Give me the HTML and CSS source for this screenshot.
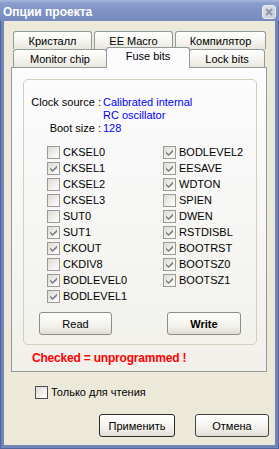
FILE: index.html
```html
<!DOCTYPE html>
<html lang="ru">
<head>
    <meta charset="UTF-8">
    <title>Опции проекта</title>
    <link rel="stylesheet" href="styles.css">
</head>
<body>
    <div class="window">
        <div class="titlebar">
            <span class="title">Опции проекта</span>
            <span class="close">
                <svg width="8" height="8" viewBox="0 0 8 8"><path d="M1 1 L7 7 M7 1 L1 7" stroke="#8e96a8" stroke-width="2" fill="none"/></svg>
            </span>
        </div>

        <div class="client">
            <!-- Tab headers, two rows -->
            <div class="tabs">
                <div class="tab-row">
                    <div class="tab w-kr">Кристалл</div>
                    <div class="tab w-ee">EE Macro</div>
                    <div class="tab w-comp">Компилятор</div>
                </div>
                <div class="tab-row front">
                    <div class="tab w-mon">Monitor chip</div>
                    <div class="tab w-fuse active">Fuse bits</div>
                    <div class="tab w-lock">Lock bits</div>
                </div>
            </div>

            <div class="panel">
                <div class="group">
                    <div class="info">
                        <span class="key">Clock source :</span>
                        <span class="val">Calibrated internal<br>RC oscillator</span>
                        <span class="key">Boot size :</span>
                        <span class="val">128</span>
                    </div>

                    <div class="bits" id="bits"></div>

                    <div class="actions">
                        <button class="btn read">Read</button>
                        <button class="btn write">Write</button>
                    </div>
                </div>
                <p class="warn">Checked = unprogrammed !</p>
            </div>

            <div class="readonly">
                <span class="cb dark"></span>
                <span>Только для чтения</span>
            </div>

            <div class="footer">
                <button class="btn apply">Применить</button>
                <button class="btn cancel">Отмена</button>
            </div>
        </div>
    </div>

    <script>
        // Fuse bits: [name, checked]
        const fuses = [
            ['CKSEL0', false], ['CKSEL1', true], ['CKSEL2', false], ['CKSEL3', false],
            ['SUT0', false], ['SUT1', true], ['CKOUT', true], ['CKDIV8', false],
            ['BODLEVEL0', true], ['BODLEVEL1', true],
            ['BODLEVEL2', true], ['EESAVE', true], ['WDTON', true], ['SPIEN', false],
            ['DWEN', true], ['RSTDISBL', true], ['BOOTRST', true], ['BOOTSZ0', true],
            ['BOOTSZ1', true]
        ];
        const tick = '<svg width="7" height="7" viewBox="0 0 7 7"><path d="M0 2.5 L2.5 5 L7 0.5 V3 L2.5 7 L0 4.5Z" fill="#7e7e7e"/></svg>';
        const bits = document.getElementById('bits');

        fuses.forEach(([name, checked]) => {
            const row = document.createElement('div');
            row.className = 'bit';
            row.innerHTML = `<span class="cb">${checked ? tick : ''}</span><span>${name}</span>`;
            bits.appendChild(row);
        });
    </script>
</body>
</html>
```

FILE: styles.css
```css
body {
    margin: 0;
    font-family: "Liberation Sans", Arial, sans-serif;
    font-size: 11px;
    color: #000;
}

.window {
    width: 279px;
    height: 449px;
    box-sizing: border-box;
    display: flex;
    flex-direction: column;
    background: #7084b8;
    border: 1px solid #52649a;
    border-top: none;
}

.titlebar {
    height: 21px;
    margin: 0 -1px;
    display: flex;
    align-items: center;
    justify-content: space-between;
    padding: 0 3px 0 3px;
    background: linear-gradient(#a9b8dc 0, #8c9ecd 3px, #7f93c4 50%, #768abd 100%);
}

.title {
    color: #fff;
    font-weight: bold;
    font-size: 12px;
    padding-top: 2px;
}

.close {
    width: 14px;
    height: 14px;
    box-sizing: border-box;
    border: 1px solid #e8ecf4;
    border-radius: 3px;
    background: linear-gradient(135deg, #dfe3ec, #c3cadb);
    display: flex;
    align-items: center;
    justify-content: center;
    margin-top: 2px;
}

.client {
    flex: 1;
    margin: 0 3px 3px;
    background: #ece9d8;
    display: flex;
    flex-direction: column;
}

/* tabs */
.tabs {
    margin: 10px 0 0 7px;
    position: relative;
    z-index: 1;
}

.tab-row {
    display: flex;
    height: 18px;
    padding-left: 2px;
}

.tab {
    height: 18px;
    box-sizing: border-box;
    border: 1px solid #919b9c;
    border-bottom: none;
    border-radius: 3px 3px 0 0;
    background: linear-gradient(#ffffff, #f3f2ec 60%, #e9e7dd);
    text-align: center;
    line-height: 18px;
}

.w-kr { width: 79px; margin-right: 2px; }
.w-ee { width: 79px; margin-right: 2px; }
.w-comp { width: 91px; }

.w-mon { width: 94px; }
.w-fuse { width: 84px; margin-left: -1px; }
.w-lock { width: 76px; margin-left: -1px; }

.tab.active {
    height: 21px;
    margin-top: -2px;
    line-height: 17px;
    background: #fcfcfe;
    border-color: #919b9c;
    position: relative;
    z-index: 2;
}

.panel {
    margin-left: 7px;
    width: 256px;
    height: 305px;
    box-sizing: border-box;
    border: 1px solid #919b9c;
    background: linear-gradient(#fcfcfe, #f1f0ea);
    display: flex;
    flex-direction: column;
}

.group {
    margin: 11px 0 0 11px;
    width: 234px;
    box-sizing: border-box;
    border: 1px solid #d0d0bf;
    border-radius: 5px;
    padding: 16px 0 9px;
}

.info {
    display: grid;
    grid-template-columns: 77px auto;
    column-gap: 2px;
    line-height: 13px;
}

.key {
    text-align: right;
}

.val {
    color: #0000ff;
}

.bits {
    margin-top: 9px;
    padding-left: 23px;
    display: grid;
    grid-template-columns: 116px 116px;
    grid-template-rows: repeat(10, 16px);
    grid-auto-flow: column;
}

.bit {
    display: flex;
    align-items: center;
    gap: 3px;
}

.cb {
    width: 13px;
    height: 13px;
    box-sizing: border-box;
    flex: none;
    border: 1px solid #9a9a98;
    background: linear-gradient(135deg, #dcdbd4, #ffffff);
    display: flex;
    align-items: center;
    justify-content: center;
}

.cb.dark {
    border-color: #4e4e4e;
}

.actions {
    margin-top: 8px;
    padding-left: 15px;
    display: flex;
    gap: 55px;
}

.btn {
    font-family: inherit;
    font-size: 11px;
    font-weight: normal;
    color: #000;
    height: 23px;
    box-sizing: border-box;
    padding: 0;
    border: 1px solid #8d8d8a;
    border-radius: 3px;
    background: linear-gradient(#ffffff, #f4f3ee 55%, #e2dfd4);
}

.read { width: 73px; }
.write { width: 74px; font-weight: bold; }

.warn {
    margin: 7px 0 0 20px;
    color: #ff0000;
    font-weight: bold;
    font-size: 12px;
    letter-spacing: -0.2px;
    line-height: 13px;
}

.readonly {
    margin: 14px 0 0 31px;
    display: flex;
    align-items: center;
    gap: 3px;
    line-height: 13px;
}

.footer {
    margin-top: 15px;
    display: flex;
    justify-content: flex-end;
    gap: 20px;
    padding-right: 6px;
}

.apply {
    width: 76px;
    border-color: #2b2b2b;
}

.cancel {
    width: 74px;
    border-color: #454545;
}
```
